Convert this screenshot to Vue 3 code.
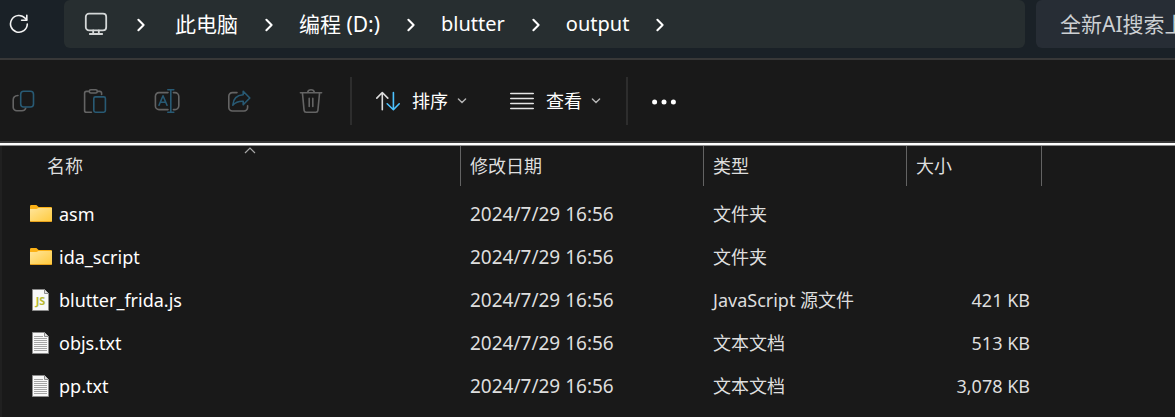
<script setup>
const crumbs = [
  { label: '此电脑', cjk: true },
  { label: '编程 (D:)', cjk: true },
  { label: 'blutter', cjk: false },
  { label: 'output', cjk: false },
]

const files = [
  { name: 'asm', icon: 'folder', date: '2024/7/29 16:56', type: '文件夹', size: '' },
  { name: 'ida_script', icon: 'folder', date: '2024/7/29 16:56', type: '文件夹', size: '' },
  { name: 'blutter_frida.js', icon: 'js', date: '2024/7/29 16:56', type: 'JavaScript 源文件', size: '421 KB' },
  { name: 'objs.txt', icon: 'text', date: '2024/7/29 16:56', type: '文本文档', size: '513 KB' },
  { name: 'pp.txt', icon: 'text', date: '2024/7/29 16:56', type: '文本文档', size: '3,078 KB' },
]
</script>

<template>
  <div class="explorer">
    <header class="nav">
      <button class="refresh" aria-label="刷新">
        <svg width="20" height="20" viewBox="0 0 20 20" fill="none" stroke="#f2f2f2" stroke-width="1.6" stroke-linecap="round" stroke-linejoin="round">
          <path d="M18.3 10A8.4 8.4 0 1 1 16.2 4.3L17.6 6" />
          <path d="M17.8 1.3V6.3H12.6" />
        </svg>
      </button>
      <nav class="address" aria-label="路径">
        <button class="device" aria-label="此设备">
          <svg width="24" height="24" viewBox="0 0 24 24" fill="none" stroke="#d4d7d7" stroke-width="1.8" stroke-linecap="round">
            <rect x="1.8" y="1.6" width="20.4" height="16.8" rx="3.2" />
            <path d="M9.2 18.4V21.5M14.8 18.4V21.5M5.8 22H18.2" />
          </svg>
        </button>
        <svg class="sep first" width="8" height="14" viewBox="0 0 8 14"><path d="M1.4 1.8L6.6 7L1.4 12.2" /></svg>
        <template v-for="c in crumbs" :key="c.label">
          <button class="crumb" :class="{ cjk: c.cjk }">{{ c.label }}</button>
          <svg class="sep" width="8" height="14" viewBox="0 0 8 14"><path d="M1.4 1.8L6.6 7L1.4 12.2" /></svg>
        </template>
      </nav>
      <input class="search" type="text" aria-label="搜索" placeholder="全新AI搜索上线" />
    </header>

    <div class="toolbar" role="toolbar">
      <button class="tool" aria-label="复制" disabled>
        <svg width="24" height="24" viewBox="0 0 24 24">
          <path d="M7 6.5C4 6.7 2.2 8.4 2.2 11V18.2A3.6 3.6 0 0 0 5.8 21.8H11C13 21.8 14.2 20.9 14.7 19.3" />
          <rect class="blue" x="9.7" y="2.2" width="12.8" height="15.8" rx="3" />
        </svg>
      </button>
      <button class="tool" aria-label="粘贴" disabled>
        <svg width="24" height="24" viewBox="0 0 24 24">
          <path d="M6 2.4H3.4A1.8 1.8 0 0 0 1.6 4.2V21.4A1.8 1.8 0 0 0 3.4 23.2H8.4M14.6 2.4H16.8A1.8 1.8 0 0 1 18.6 4.2V5.4" />
          <rect x="6.3" y="0.8" width="8" height="3.2" rx="1.6" />
          <rect class="blue" x="10.8" y="7.9" width="11.6" height="15.3" rx="1.6" />
        </svg>
      </button>
      <button class="tool" aria-label="重命名" disabled>
        <svg width="26" height="24" viewBox="-1 0 26 24">
          <path d="M13 3.6H4A3.6 3.6 0 0 0 0.4 7.2V17A3.6 3.6 0 0 0 4 20.6H13M18.4 3.6H20A3.8 3.8 0 0 1 23.8 7.4V16.8A3.8 3.8 0 0 1 20 20.6H18.4" />
          <path class="blue" d="M12.8 0.8H18.8M15.8 0.8V23.2M12.8 23.2H18.8M4 16.2L8 6.8L12 16.2M5.3 13.2H10.7" />
        </svg>
      </button>
      <button class="tool" aria-label="共享" disabled>
        <svg width="24" height="24" viewBox="0 0 24 24">
          <path d="M10 3.6H5.4A3.6 3.6 0 0 0 1.8 7.2V18.4A3.6 3.6 0 0 0 5.4 22H17A3.6 3.6 0 0 0 20.6 18.4V16.8" />
          <path class="blue" d="M16.2 2.2L22.8 9L16.2 15.8V12.2C11.5 12 8.4 13.2 5.8 16.2C6.2 10 10 6.1 16.2 5.8Z" />
        </svg>
      </button>
      <button class="tool" aria-label="删除" disabled>
        <svg width="24" height="24" viewBox="0 0 24 24">
          <path d="M1.4 3.7H22.6M8.6 3.4C9 1.7 10.2 0.8 12 0.8S15 1.7 15.4 3.4M3.4 3.7L5.1 21.4A2 2 0 0 0 7.1 23.2H16.9A2 2 0 0 0 18.9 21.4L20.6 3.7M10.2 9.4V17.4M13.8 9.4V17.4" />
        </svg>
      </button>
      <span class="divider"></span>
      <button class="menu">
        <svg width="24" height="20" viewBox="0 0 24 20" fill="none" stroke-width="1.6" stroke-linecap="round" stroke-linejoin="round">
          <path stroke="#dcdcdc" d="M6.3 18.8V1.5M0.8 7.1L6.3 1.5L11.8 7.1" />
          <path stroke="#4cc2ff" d="M17.4 1.5V18.8M11.2 12.8L17.4 18.8L23.2 12.8" />
        </svg>
        <span>排序</span>
        <svg class="caret" width="10" height="6" viewBox="0 0 10 6"><path d="M1.4 1L5 4.6L8.6 1" /></svg>
      </button>
      <button class="menu">
        <svg width="24" height="18" viewBox="0 0 24 18" fill="none" stroke="#e6e6e6" stroke-width="1.5" stroke-linecap="round">
          <path d="M0.7 1.5H23.3M0.7 6.5H23.3M0.7 11.5H23.3M0.7 16.5H23.3" />
        </svg>
        <span>查看</span>
        <svg class="caret" width="10" height="6" viewBox="0 0 10 6"><path d="M1.4 1L5 4.6L8.6 1" /></svg>
      </button>
      <span class="divider"></span>
      <button class="more" aria-label="更多">
        <svg width="24" height="8" viewBox="0 0 24 8" fill="#fff">
          <circle cx="2.6" cy="5" r="2.5" /><circle cx="12" cy="5" r="2.5" /><circle cx="21.4" cy="5" r="2.5" />
        </svg>
      </button>
    </div>

    <main class="list">
      <table>
        <colgroup>
          <col class="c-name" /><col class="c-date" /><col class="c-type" /><col class="c-size" /><col />
        </colgroup>
        <thead>
          <tr>
            <th class="name-head" aria-sort="ascending">
              <button class="head">
                名称
                <svg class="sorted" width="12" height="7" viewBox="0 0 12 7"><path d="M1 6L6 1L11 6" /></svg>
              </button>
            </th>
            <th><button class="head">修改日期</button></th>
            <th><button class="head">类型</button></th>
            <th><button class="head">大小</button></th>
            <td></td>
          </tr>
        </thead>
        <tbody>
          <tr v-for="f in files" :key="f.name">
            <td>
              <div class="file">
                <svg v-if="f.icon === 'folder'" width="22" height="18" viewBox="0 0 22 18">
                  <defs>
                    <linearGradient id="folderFace" x1="0" y1="0" x2="1" y2="1">
                      <stop offset="0" stop-color="#ffe59a" /><stop offset="1" stop-color="#ffca3e" />
                    </linearGradient>
                  </defs>
                  <path fill="#fbb116" d="M0 1.2Q0 0 1.2 0H6.4L8.6 2H21Q22 2 22 3V8H0Z" />
                  <path fill="url(#folderFace)" d="M0 4H6.5L8.5 3H22V16.4H0Z" />
                  <path fill="#e8a21c" d="M0 16H22Q22 17 21 17H1Q0 17 0 16Z" />
                </svg>
                <svg v-else width="22" height="22" viewBox="0 0 22 22">
                  <path fill="#f8f8f8" stroke="#8c8c8c" d="M2.5 0.5H14.5L18.5 4.5V21.5H2.5Z" />
                  <path fill="#dedede" stroke="#8c8c8c" d="M14.5 0.5V4.5H18.5" />
                  <text v-if="f.icon === 'js'" class="badge" x="10.5" y="16">JS</text>
                  <path v-else stroke="#a4a4a4" d="M4 4.5H13M4 6.5H17M4 8.5H17M4 10.5H17M4 12.5H17M4 14.5H17M4 16.5H17M4 18.5H17" />
                </svg>
                <span>{{ f.name }}</span>
              </div>
            </td>
            <td class="date">{{ f.date }}</td>
            <td>{{ f.type }}</td>
            <td class="size">{{ f.size }}</td>
            <td></td>
          </tr>
        </tbody>
      </table>
    </main>
  </div>
</template>

<style>
body {
  margin: 0;
  background: #191919;
}
</style>

<style scoped>
.explorer {
  display: flex;
  flex-direction: column;
  min-height: 100vh;
  box-sizing: border-box;
  background: #191919;
  color: #fff;
  font-family: "Noto Sans", "Noto Sans CJK SC", sans-serif;
  font-size: 18px;
  line-height: 24px;
  overflow: hidden;
}
button {
  display: flex;
  align-items: center;
  margin: 0;
  padding: 0;
  border: 0;
  background: none;
  color: inherit;
  font: inherit;
  white-space: nowrap;
}
svg {
  display: block;
  flex: none;
}
.nav {
  display: flex;
  align-items: flex-start;
  height: 58px;
  background: #1a2127;
  border-bottom: 2px solid #383838;
}
.refresh {
  width: 64px;
  height: 48px;
  padding-left: 9px;
  flex: none;
}
.address {
  flex: 1;
  display: flex;
  align-items: center;
  height: 48px;
  margin-right: 11px;
  padding-left: 20px;
  background: #272e30;
  border-radius: 6px;
  box-sizing: border-box;
}
.device {
  height: 46px;
}
.sep {
  margin: 2px 26px 0 27px;
  fill: none;
  stroke: #fff;
  stroke-width: 2;
  stroke-linecap: round;
  stroke-linejoin: round;
}
.sep.first {
  margin: 2px 30px 0 29px;
}
.crumb {
  height: 48px;
  font-size: 20px;
}
.crumb.cjk {
  font-size: 21px;
}
.search {
  width: 139px;
  height: 48px;
  padding: 0 0 0 24px;
  border: 0;
  border-radius: 6px 0 0 6px;
  box-sizing: border-box;
  background: #272d35;
  color: #fff;
  font-family: inherit;
  font-size: 21px;
}
.search::placeholder {
  color: #cdd0d3;
  opacity: 1;
}
.toolbar {
  display: flex;
  align-items: center;
  height: 81px;
  border-bottom: 2px solid #383838;
}
.tool {
  justify-content: center;
  width: 72px;
  height: 48px;
  flex: none;
}
.tool:first-child {
  width: 59px;
  padding-right: 13px;
}
.tool svg {
  fill: none;
  stroke: #646464;
  stroke-width: 1.6;
  stroke-linecap: round;
  stroke-linejoin: round;
}
.tool .blue {
  stroke: #285a74;
}
.divider {
  width: 2px;
  height: 48px;
  background: #2d2d2d;
}
.tool + .divider {
  margin-left: 3px;
}
.menu {
  gap: 12px;
  height: 48px;
  padding: 0 19px 0 24px;
}
.menu + .menu {
  margin-right: 6px;
}
.caret {
  margin-left: -3px;
  fill: none;
  stroke: #b4b4b4;
  stroke-width: 1.4;
  stroke-linecap: round;
}
.more {
  height: 48px;
  padding: 0 24px;
}
.list {
  flex: 1;
  box-shadow: inset 0 2px #fff, inset 0 3px #8e8e8e, inset 2px 0 #202020;
  padding: 3px 0 0 2px;
}
table {
  width: 100%;
  table-layout: fixed;
  border-collapse: separate;
  border-spacing: 0;
  color: #dedede;
}
.c-name { width: 459px; }
.c-date { width: 243px; }
.c-type { width: 203px; }
.c-size { width: 135px; }
th {
  padding: 0;
  height: 40px;
  border-right: 1px solid #636363;
  font-weight: 400;
}
.name-head {
  padding-left: 37px;
}
.head {
  position: relative;
  width: 100%;
  height: 40px;
  padding-left: 9px;
}
.name-head .head {
  padding-left: 8px;
}
.sorted {
  position: absolute;
  top: 1px;
  left: 50%;
  transform: translateX(-50%);
  fill: none;
  stroke: #a6a6a6;
  stroke-width: 1.2;
}
tbody::before {
  content: "";
  display: block;
  height: 6px;
}
tbody td {
  height: 43px;
  padding: 0 0 0 9px;
  white-space: nowrap;
}
tbody td:first-child {
  padding-left: 28px;
}
tbody .date {
  font-size: 19px;
}
tbody .size {
  padding-right: 12px;
  text-align: right;
}
.file {
  display: flex;
  align-items: center;
  gap: 7px;
  color: #fff;
}
.badge {
  fill: #b7b931;
  font-size: 11px;
  font-weight: 700;
  text-anchor: middle;
}
</style>
